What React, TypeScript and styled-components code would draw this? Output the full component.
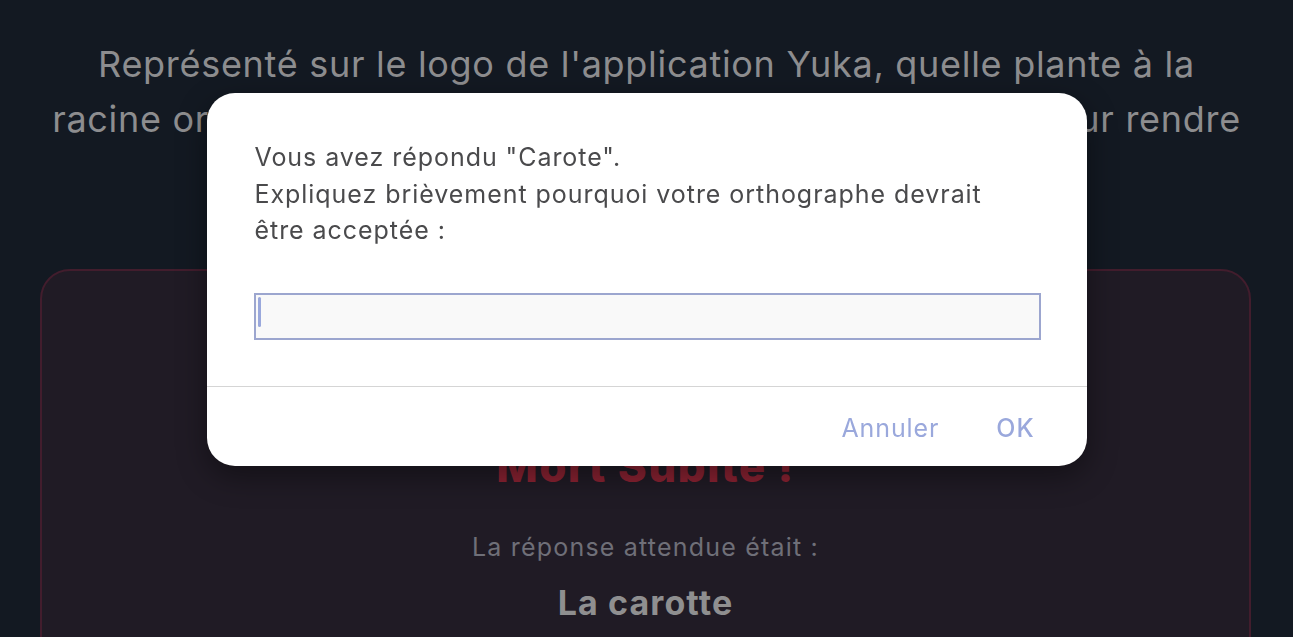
import styled, { createGlobalStyle } from "styled-components";

const GlobalStyle = createGlobalStyle`
    html, body {
        margin: 0;
        padding: 0;
        background-color: #131922;
        font-family: Inter, "Noto Sans", "Liberation Sans", sans-serif;
        overflow: hidden;
    }
`;

const App = () => {
    return (
        <>
            <GlobalStyle />
            <Page>
                <Question>
                    Représenté sur le logo de l'application Yuka, quelle plante à la
                    <br />
                    racine orangée est, selon le dicton, l'aliment à croquer, pour rendre
                    <br />
                    aimable ?
                </Question>
                <ResultCard>
                    <ResultIcon>⏱</ResultIcon>
                    <ResultTitle>Mort Subite !</ResultTitle>
                    <ExpectedLabel>La réponse attendue était :</ExpectedLabel>
                    <ExpectedAnswer>La carotte</ExpectedAnswer>
                </ResultCard>
            </Page>
            <Overlay>
                <PromptDialog>
                    <PromptBody>
                        <PromptMessage>
                            Vous avez répondu "Carote".
                            <br />
                            Expliquez brièvement pourquoi votre orthographe devrait
                            <br />
                            être acceptée :
                        </PromptMessage>
                        <PromptInput>
                            <Caret />
                        </PromptInput>
                    </PromptBody>
                    <PromptActions>
                        <PromptButton>Annuler</PromptButton>
                        <PromptButton $bold>OK</PromptButton>
                    </PromptActions>
                </PromptDialog>
            </Overlay>
        </>
    );
};

const Page = styled.div`
    display: flex;
    flex-direction: column;
    height: 637px;
    padding-top: 37px;
    box-sizing: border-box;
    overflow: hidden;
`;

const Question = styled.h2`
    margin: 0;
    padding: 0 30px;
    font-size: 36px;
    line-height: 55px;
    letter-spacing: 0.7px;
    font-weight: 400;
    color: #8d8d8f;
    text-align: center;
    white-space: nowrap;
`;

const ResultCard = styled.section`
    display: flex;
    flex-direction: column;
    align-items: center;
    flex-shrink: 0;
    margin: 67px 42px 0 40px;
    padding-top: 60px;
    min-height: 500px;
    background-color: #201b25;
    border: 2px solid #421d2d;
    border-radius: 30px;
`;

const ResultIcon = styled.div`
    height: 80px;
    font-size: 60px;
    line-height: 80px;
`;

const ResultTitle = styled.h3`
    margin: 29px 0 0;
    font-size: 44px;
    line-height: 1.2;
    letter-spacing: 1.4px;
    font-weight: 800;
    color: #8a2232;
`;

const ExpectedLabel = styled.p`
    margin: 37px 0 0;
    font-size: 25px;
    line-height: 1.4;
    letter-spacing: 1.2px;
    color: #6f6f78;
`;

const ExpectedAnswer = styled.p`
    margin: 18px 0 0;
    font-size: 34px;
    line-height: 1.2;
    letter-spacing: 1.1px;
    font-weight: 700;
    color: #8f8f90;
`;

const Overlay = styled.div`
    position: fixed;
    inset: 0;
    display: flex;
    justify-content: center;
    align-items: flex-start;
    padding-top: 93px;
`;

const PromptDialog = styled.div`
    width: 880px;
    height: 373px;
    display: flex;
    flex-direction: column;
    background-color: #ffffff;
    border-radius: 28px;
    box-shadow: 0 10px 30px rgba(0, 0, 0, 0.4);
    overflow: hidden;
`;

const PromptBody = styled.div`
    display: flex;
    flex-direction: column;
    padding: 46px 46px 46px 47px;
    border-bottom: 1.5px solid #d5d5d5;
`;

const PromptMessage = styled.p`
    margin: 0 0 0 1px;
    font-size: 25px;
    line-height: 36.5px;
    letter-spacing: 0.95px;
    color: #4a4a4c;
`;

const PromptInput = styled.div`
    display: flex;
    align-items: flex-start;
    margin-top: 44px;
    height: 47px;
    padding: 2px;
    box-sizing: border-box;
    background-color: #f9f9f9;
    border: 2px solid #9ca6cf;
`;

const Caret = styled.span`
    width: 3px;
    height: 30px;
    border-radius: 2px;
    background-color: #9aa8dc;
`;

const PromptActions = styled.div`
    flex: 1;
    display: flex;
    justify-content: flex-end;
    align-items: center;
    gap: 57px;
    padding: 3px 52px 0 0;
`;

const PromptButton = styled.button<{ $bold?: boolean }>`
    padding: 0;
    border: none;
    background: none;
    font-family: inherit;
    font-size: 25px;
    letter-spacing: 0.9px;
    font-weight: ${(props) => (props.$bold ? 500 : 400)};
    color: #9aa8dc;
    cursor: pointer;
`;

export default App;
